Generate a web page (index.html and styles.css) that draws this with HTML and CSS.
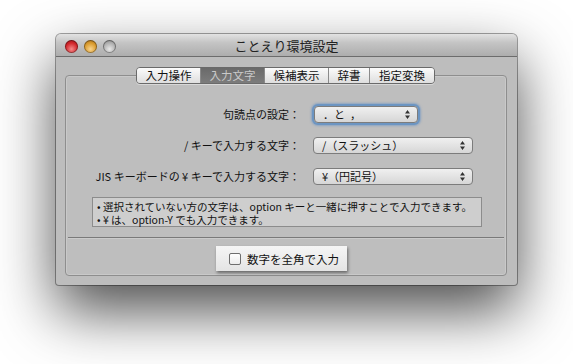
FILE: index.html
```html
<!DOCTYPE html>
<html lang="ja">

<head>
    <title>ことえり環境設定</title>
    <meta charset="UTF-8" />
    <meta name="viewport" content="width=device-width, initial-scale=1.0" />
    <link rel="stylesheet" href="styles.css">
</head>

<body>
    <main class="desk">
        <div class="window">
            <header class="titlebar">
                <div class="lights">
                    <span class="light red"></span>
                    <span class="light yellow"></span>
                    <span class="light gray"></span>
                </div>
                <h1 class="title">ことえり環境設定</h1>
            </header>
            <section class="tabbox">
                <nav class="tabs">
                    <span class="tab w64">入力操作</span>
                    <span class="tab w64 active">入力文字</span>
                    <span class="tab w65">候補表示</span>
                    <span class="tab w41">辞書</span>
                    <span class="tab w65 last">指定変換</span>
                </nav>
                <!-- popup settings -->
                <form class="grid-form">
                    <label for="punct">句読点の設定：</label>
                    <div class="popup short focus" id="punct">
                        <span class="value">．と  ，</span>
                        <svg class="arrows" width="5" height="9" viewBox="0 0 5 9"><path d="M0 3.5 L2.5 0 L5 3.5 Z M0 5.5 L2.5 9 L5 5.5 Z" fill="#333"/></svg>
                    </div>
                    <label for="slash">/ キーで入力する文字：</label>
                    <div class="popup" id="slash">
                        <span class="value">/（スラッシュ）</span>
                        <svg class="arrows" width="5" height="9" viewBox="0 0 5 9"><path d="M0 3.5 L2.5 0 L5 3.5 Z M0 5.5 L2.5 9 L5 5.5 Z" fill="#333"/></svg>
                    </div>
                    <label for="yen">JIS キーボードの ¥ キーで入力する文字：</label>
                    <div class="popup" id="yen">
                        <span class="value">¥（円記号）</span>
                        <svg class="arrows" width="5" height="9" viewBox="0 0 5 9"><path d="M0 3.5 L2.5 0 L5 3.5 Z M0 5.5 L2.5 9 L5 5.5 Z" fill="#333"/></svg>
                    </div>
                </form>
                <div class="note">
                    <p>• 選択されていない方の文字は、option キーと一緒に押すことで入力できます。</p>
                    <p>• ¥ は、option-Y でも入力できます。</p>
                </div>
                <hr class="divider">
                <div class="check-button">
                    <span class="checkbox"></span>
                    <span>数字を全角で入力</span>
                </div>
            </section>
        </div>
    </main>
</body>

</html>
```

FILE: styles.css
```css
html,
body {
    margin: 0;
    background-color: #fff;
}

body {
    font-family: "Noto Sans CJK JP", "Noto Sans", sans-serif;
    color: #111;
}

.desk {
    height: 364px;
    padding: 34px 0 0 56px;
    box-sizing: border-box;
    overflow: hidden;
}

.window {
    width: 461px;
    height: 251px;
    background-color: #bdbdbd;
    border-radius: 5px 5px 3px 3px;
    box-shadow: 0 26px 60px rgba(0, 0, 0, 0.7), 0 0 0 1px rgba(0, 0, 0, 0.35);
    overflow: hidden;
    display: flex;
    flex-direction: column;
}

/* title bar */
.titlebar {
    height: 22px;
    flex-shrink: 0;
    border-bottom: 1px solid #6c6c6c;
    background: linear-gradient(#e2e2e2, #c4c4c4 40%, #adadad);
    display: flex;
    align-items: center;
    position: relative;
}

.lights {
    display: flex;
    gap: 6px;
    margin-left: 9px;
    margin-top: 3px;
}

.light {
    width: 13px;
    height: 13px;
    border-radius: 50%;
    box-shadow: inset 0 0 0 1px rgba(0, 0, 0, 0.35);
}

.red {
    background: radial-gradient(circle at 50% 70%, #f58a8a, #d1252a 55%, #8e1318);
}

.yellow {
    background: radial-gradient(circle at 50% 70%, #f9d48d, #d99a2c 55%, #94621a);
}

.gray {
    background: radial-gradient(circle at 50% 70%, #e8e8e8, #b0b0b0 55%, #7c7c7c);
}

.title {
    position: absolute;
    left: 0;
    right: 0;
    top: 4px;
    margin: 0;
    text-align: center;
    font-size: 13px;
    font-weight: normal;
    line-height: 16px;
    color: #222;
}

/* tab box */
.tabbox {
    margin: 18px 0 0 9px;
    width: 440px;
    height: 199px;
    flex-shrink: 0;
    border: 1px solid #8e8e8e;
    border-radius: 4px;
    background-color: #bebebe;
    box-shadow: inset 0 0 0 1px rgba(255, 255, 255, 0.18);
}

.tabs {
    display: flex;
    margin: -9px 0 0 70px;
    width: 299px;
    height: 17px;
    border: 1px solid #6a6a6a;
    border-radius: 4px;
    overflow: hidden;
    box-sizing: border-box;
    box-shadow: 0 1px 0 rgba(255, 255, 255, 0.4);
}

.tab {
    font-size: 11.5px;
    line-height: 15px;
    text-align: center;
    background: linear-gradient(#fbfbfb, #dedede);
    border-right: 1px solid #8a8a8a;
    box-sizing: border-box;
}

.tab.last {
    border-right: none;
}

.tab.active {
    background: linear-gradient(#6a6a6a, #7c7c7c);
    color: #c9c9c9;
}

.w64 {
    width: 64px;
}

.w65 {
    width: 64px;
}

.w41 {
    width: 41px;
}

/* form rows */
.grid-form {
    display: grid;
    grid-template-columns: 234px 160px;
    grid-auto-rows: 18px;
    column-gap: 13px;
    row-gap: 13px;
    margin-top: 21px;
    align-items: center;
}

.grid-form label {
    font-size: 11px;
    text-align: right;
    white-space: nowrap;
}

.popup {
    height: 17px;
    box-sizing: border-box;
    border: 1px solid #7c7c7c;
    border-radius: 4px;
    background: linear-gradient(#f0f0f0, #d6d6d6);
    display: flex;
    align-items: center;
    justify-content: space-between;
    padding: 0 7px 0 8px;
    font-size: 11px;
}

.popup.short {
    width: 104px;
    margin-left: 1px;
}

.popup.focus {
    box-shadow: 0 0 0 2px #6c95c2, 0 0 2px 3px rgba(90, 140, 200, 0.5);
}

.value {
    white-space: pre;
}

/* note box */
.note {
    margin: 12px 0 0 26px;
    width: 390px;
    height: 30px;
    box-sizing: border-box;
    border: 1px solid #8c8c8c;
    background-color: #cecece;
    padding: 2px 4px;
    font-size: 10.5px;
    line-height: 13px;
}

.note p {
    margin: 0;
    white-space: nowrap;
}

.divider {
    margin: 10px 2px 0 2px;
    border: none;
    border-top: 1px solid #7a7a7a;
    border-bottom: 1px solid rgba(255, 255, 255, 0.2);
    height: 0;
}

.check-button {
    margin: 7px 0 0 150px;
    width: 131px;
    height: 25px;
    box-sizing: border-box;
    background: linear-gradient(#f5f5f5, #e4e4e4);
    box-shadow: 1px 2px 3px rgba(0, 0, 0, 0.45);
    display: flex;
    align-items: center;
    gap: 6px;
    padding-left: 13px;
    font-size: 11.5px;
}

.checkbox {
    width: 12px;
    height: 12px;
    box-sizing: border-box;
    border: 1px solid #6e6e6e;
    border-radius: 2px;
    background: linear-gradient(#fff, #ececec);
}
```
